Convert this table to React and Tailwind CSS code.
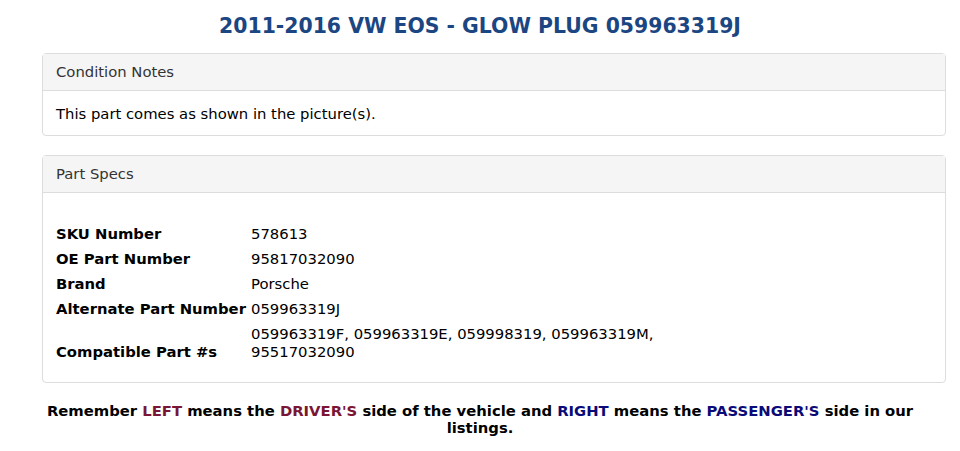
export default function App() {
  const specs = [
    ['SKU Number', '578613'],
    ['OE Part Number', '95817032090'],
    ['Brand', 'Porsche'],
    ['Alternate Part Number', '059963319J'],
  ]

  return (
    <div className="min-h-screen bg-white font-['DejaVu_Sans',sans-serif] text-black">
      <h1 className="pt-[13px] text-center text-[20.4px] font-bold leading-[26px] text-[#1b4682]">
        2011-2016 VW EOS - GLOW PLUG 059963319J
      </h1>

      <div className="ml-[42px] mt-[14px] w-[904px] rounded border border-[#ddd]">
        <div className="h-[37px] border-b border-[#ddd] bg-[#f5f5f5] px-[13px] pt-[8px] text-[14.8px] leading-[19px] text-[#333]">
          Condition Notes
        </div>
        <div className="px-[13px] pb-[12px] pt-[14px] text-[14.8px] leading-[18px]">
          This part comes as shown in the picture(s).
        </div>
      </div>

      <div className="ml-[42px] mt-[19px] w-[904px] rounded border border-[#ddd]">
        <div className="h-[37px] border-b border-[#ddd] bg-[#f5f5f5] px-[13px] pt-[8px] text-[14.8px] leading-[19px] text-[#333]">
          Part Specs
        </div>
        <div className="px-[13px] pb-[21px] pt-[29px] text-[14.8px]">
          {specs.map(([k, v]) => (
            <div key={k} className="flex h-[25px] items-center">
              <div className="w-[195px] font-bold">{k}</div>
              <div>{v}</div>
            </div>
          ))}
          <div className="flex items-end pt-[3px]">
            <div className="w-[195px] font-bold leading-[18px]">Compatible Part #s</div>
            <div className="w-[425px] leading-[18px]">
              059963319F, 059963319E, 059998319, 059963319M, 95517032090
            </div>
          </div>
        </div>
      </div>

      <p className="mx-auto mt-[19px] w-[880px] text-center text-[14.8px] font-bold leading-[17px]">
        Remember <span className="text-[#7a1535]">LEFT</span> means the{' '}
        <span className="text-[#7a1535]">DRIVER'S</span> side of the vehicle and{' '}
        <span className="text-[#0a0a78]">RIGHT</span> means the{' '}
        <span className="text-[#0a0a78]">PASSENGER'S</span> side in our listings.
      </p>
    </div>
  )
}
